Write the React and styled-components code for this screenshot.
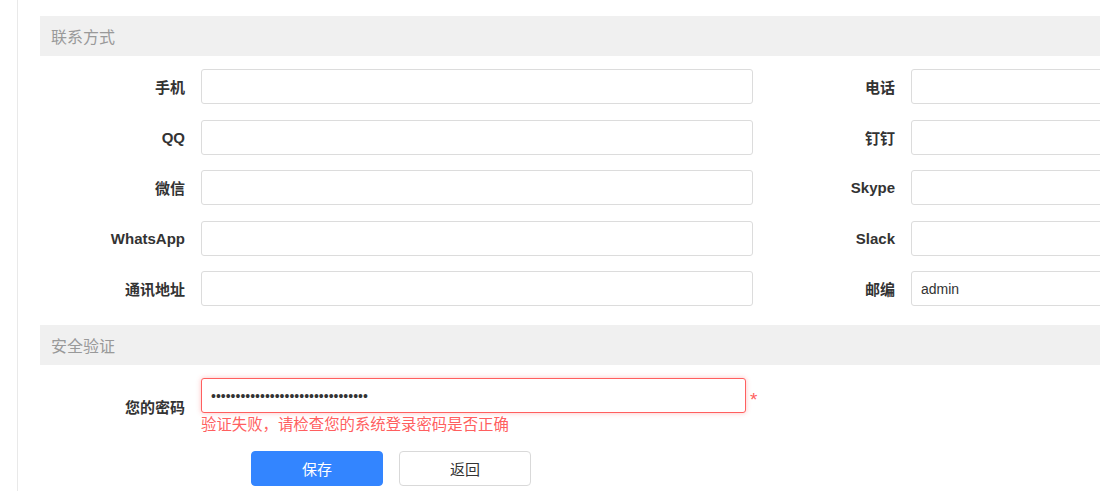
import React from "react";
import styled, { createGlobalStyle } from "styled-components";

const Global = createGlobalStyle`
  html, body { margin: 0; padding: 0; background: #fff; overflow: hidden; }
  body { font-family: "Liberation Sans", "Noto Sans CJK SC", sans-serif; color: #333; }
`;

const Page = styled.div`
  padding-left: 17px;
  width: 1600px;
`;

const Panel = styled.div`
  border-left: 1px solid #e9e9e9;
  padding: 16px 0 6px 22px;
  min-height: 469px;
`;

const SectionHeader = styled.div`
  height: 40px;
  background: #f0f0f0;
  display: flex;
  align-items: center;
  padding-left: 11px;
  padding-bottom: 1px;
  box-sizing: border-box;
  font-size: 16px;
  color: #999;
`;

const FormGrid = styled.div`
  display: grid;
  grid-template-columns: 161px 552px 158px 552px;
  row-gap: 15.5px;
  padding: 13px 0 19px;
`;

const Label = styled.label`
  align-self: center;
  text-align: right;
  padding-right: 16px;
  font-size: 15px;
  font-weight: bold;
  color: #333;
  white-space: nowrap;
`;

const Input = styled.input`
  box-sizing: border-box;
  width: ${(p) => p.$width || "552px"};
  height: 35px;
  margin: 0;
  border: 1px solid ${(p) => (p.$error ? "#ff5f5f" : "#dcdcdc")};
  border-radius: 3px;
  padding: 0 9px;
  font-family: "Liberation Sans", "Noto Sans CJK SC", sans-serif;
  font-size: 14px;
  color: #333;
  outline: none;
  background: #fff;
  box-shadow: ${(p) => (p.$error ? "0 0 5px rgba(255, 80, 80, 0.35)" : "none")};
`;

const VerifyRow = styled.div`
  display: flex;
  align-items: center;
  padding-top: 13px;
`;

const VerifyLabel = styled(Label)`
  width: 161px;
  box-sizing: border-box;
`;

const FieldGroup = styled.div`
  display: flex;
  flex-direction: column;
`;

const InputLine = styled.div`
  display: flex;
  align-items: center;
`;

const Required = styled.span`
  color: #ff5f5f;
  font-size: 19px;
  margin-left: 4px;
  line-height: 1;
  padding-top: 8px;
`;

const ErrorText = styled.div`
  color: #ff5f5f;
  font-size: 15.4px;
  line-height: 21px;
  margin-top: 1px;
`;

const ButtonRow = styled.div`
  display: flex;
  gap: 16px;
  padding: 16px 0 0 211px;
`;

const Button = styled.button`
  box-sizing: border-box;
  width: 132px;
  height: 35px;
  border-radius: 4px;
  font-family: "Liberation Sans", "Noto Sans CJK SC", sans-serif;
  font-size: 15px;
  cursor: pointer;
  border: 1px solid ${(p) => (p.$primary ? "#3385ff" : "#d9d9d9")};
  background: ${(p) => (p.$primary ? "#3385ff" : "#fff")};
  color: ${(p) => (p.$primary ? "#fff" : "#333")};
`;

const fields = [
  ["手机", "", "电话", ""],
  ["QQ", "", "钉钉", ""],
  ["微信", "", "Skype", ""],
  ["WhatsApp", "", "Slack", ""],
  ["通讯地址", "", "邮编", "admin"],
];

export default function App() {
  return (
    <>
      <Global />
      <Page>
        <Panel>
          <SectionHeader>联系方式</SectionHeader>
          <FormGrid>
            {fields.map(([l1, v1, l2, v2]) => (
              <React.Fragment key={l1}>
                <Label>{l1}</Label>
                <Input defaultValue={v1} />
                <Label>{l2}</Label>
                <Input defaultValue={v2} />
              </React.Fragment>
            ))}
          </FormGrid>
          <SectionHeader>安全验证</SectionHeader>
          <VerifyRow>
            <VerifyLabel>您的密码</VerifyLabel>
            <FieldGroup>
              <InputLine>
                <Input $error $width="545px" type="password" defaultValue="12345678901234567890123456789012" />
                <Required>*</Required>
              </InputLine>
              <ErrorText>验证失败，请检查您的系统登录密码是否正确</ErrorText>
            </FieldGroup>
          </VerifyRow>
          <ButtonRow>
            <Button $primary>保存</Button>
            <Button>返回</Button>
          </ButtonRow>
        </Panel>
      </Page>
    </>
  );
}
